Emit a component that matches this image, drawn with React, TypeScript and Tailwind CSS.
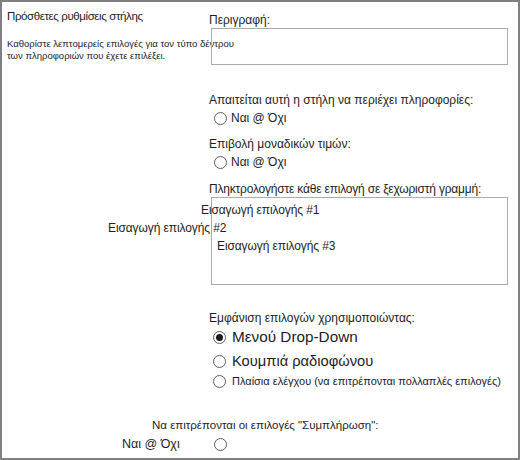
import React from 'react'

const Radio = ({ checked = false, className = '' }: { checked?: boolean; className?: string }) => (
  <span
    className={`inline-flex items-center justify-center w-[13px] h-[13px] shrink-0 rounded-full border border-[#5f5f5f] bg-white ${className}`}
  >
    {checked && <span className="w-[7px] h-[7px] rounded-full bg-[#1a1a1a]" />}
  </span>
)

const App = () => {
  return (
    <div className="w-[520px] h-[460px] border-2 border-[#808080] bg-white text-[#1e1e1e] font-['Liberation_Sans',Arial,sans-serif] flex overflow-hidden">
      {/* Left column */}
      <div className="w-[205px] shrink-0 pl-[5px] pt-[5px]">
        <div className="text-[11.5px] leading-[18px] tracking-[-0.4px] whitespace-nowrap">
          Πρόσθετες ρυθμίσεις στήλης
        </div>
        <div className="mt-[13px] text-[9.5px] leading-[12px] text-[#1b1b2e] whitespace-nowrap">
          <div>Καθορίστε λεπτομερείς επιλογές για τον τύπο δέντρου</div>
          <div>των πληροφοριών που έχετε επιλέξει.</div>
        </div>
      </div>

      {/* Right column */}
      <div className="flex-1 flex flex-col items-start pl-[2px] pt-[10px] whitespace-nowrap">
        <div className="text-[12px] leading-[16px]">Περιγραφή:</div>
        <div className="ml-[2px] w-[297px] h-[37px] border border-[#ababab]" />

        <div className="mt-[27px] text-[12px] leading-[16px]">
          Απαιτείται αυτή η στήλη να περιέχει πληροφορίες:
        </div>
        <div className="mt-[2px] h-[16px] flex items-center gap-[4px] pl-[5px] text-[12px]">
          <Radio />
          <span>Ναι @ Όχι</span>
        </div>

        <div className="mt-[10px] text-[12px] leading-[16px]">Επιβολή μοναδικών τιμών:</div>
        <div className="mt-[2px] h-[16px] flex items-center gap-[4px] pl-[5px] text-[12px]">
          <Radio />
          <span>Ναι @ Όχι</span>
        </div>

        <div className="mt-[12px] text-[12px] leading-[15px] tracking-[-0.2px]">
          Πληκτρολογήστε κάθε επιλογή σε ξεχωριστή γραμμή:
        </div>
        <div className="ml-[2px] w-[297px] h-[88px] border border-[#ababab] pt-[3px] text-[12px] leading-[18px] tracking-[-0.1px]">
          <div className="ml-[-11px]">Εισαγωγή επιλογής #1</div>
          <div className="ml-[-104px]">Εισαγωγή επιλογής #2</div>
          <div className="ml-[5px]">Εισαγωγή επιλογής #3</div>
        </div>

        <div className="mt-[25px] text-[12px] leading-[16px]">Εμφάνιση επιλογών χρησιμοποιώντας:</div>
        <div className="mt-[1px] h-[20px] flex items-center gap-[6px] pl-[4px] text-[15.3px]">
          <Radio checked />
          <span>Μενού Drop-Down</span>
        </div>
        <div className="mt-[3px] h-[22px] flex items-center gap-[6px] pl-[4px] text-[14.7px]">
          <Radio />
          <span>Κουμπιά ραδιοφώνου</span>
        </div>
        <div className="mt-[1px] h-[16px] flex items-center gap-[6px] pl-[4px] text-[11px] text-[#1b1b2e]">
          <Radio />
          <span>Πλαίσια ελέγχου (να επιτρέπονται πολλαπλές επιλογές)</span>
        </div>

        <div className="mt-[28px] ml-[-57px] text-[11.5px] leading-[16px]">
          Να επιτρέπονται οι επιλογές "Συμπλήρωση":
        </div>
        <div className="mt-[3px] ml-[-87px] h-[16px] flex items-center text-[12.5px]">
          <span className="w-[92px] pt-[1px]">Ναι @ Όχι</span>
          <Radio />
        </div>
      </div>
    </div>
  )
}

export default App
